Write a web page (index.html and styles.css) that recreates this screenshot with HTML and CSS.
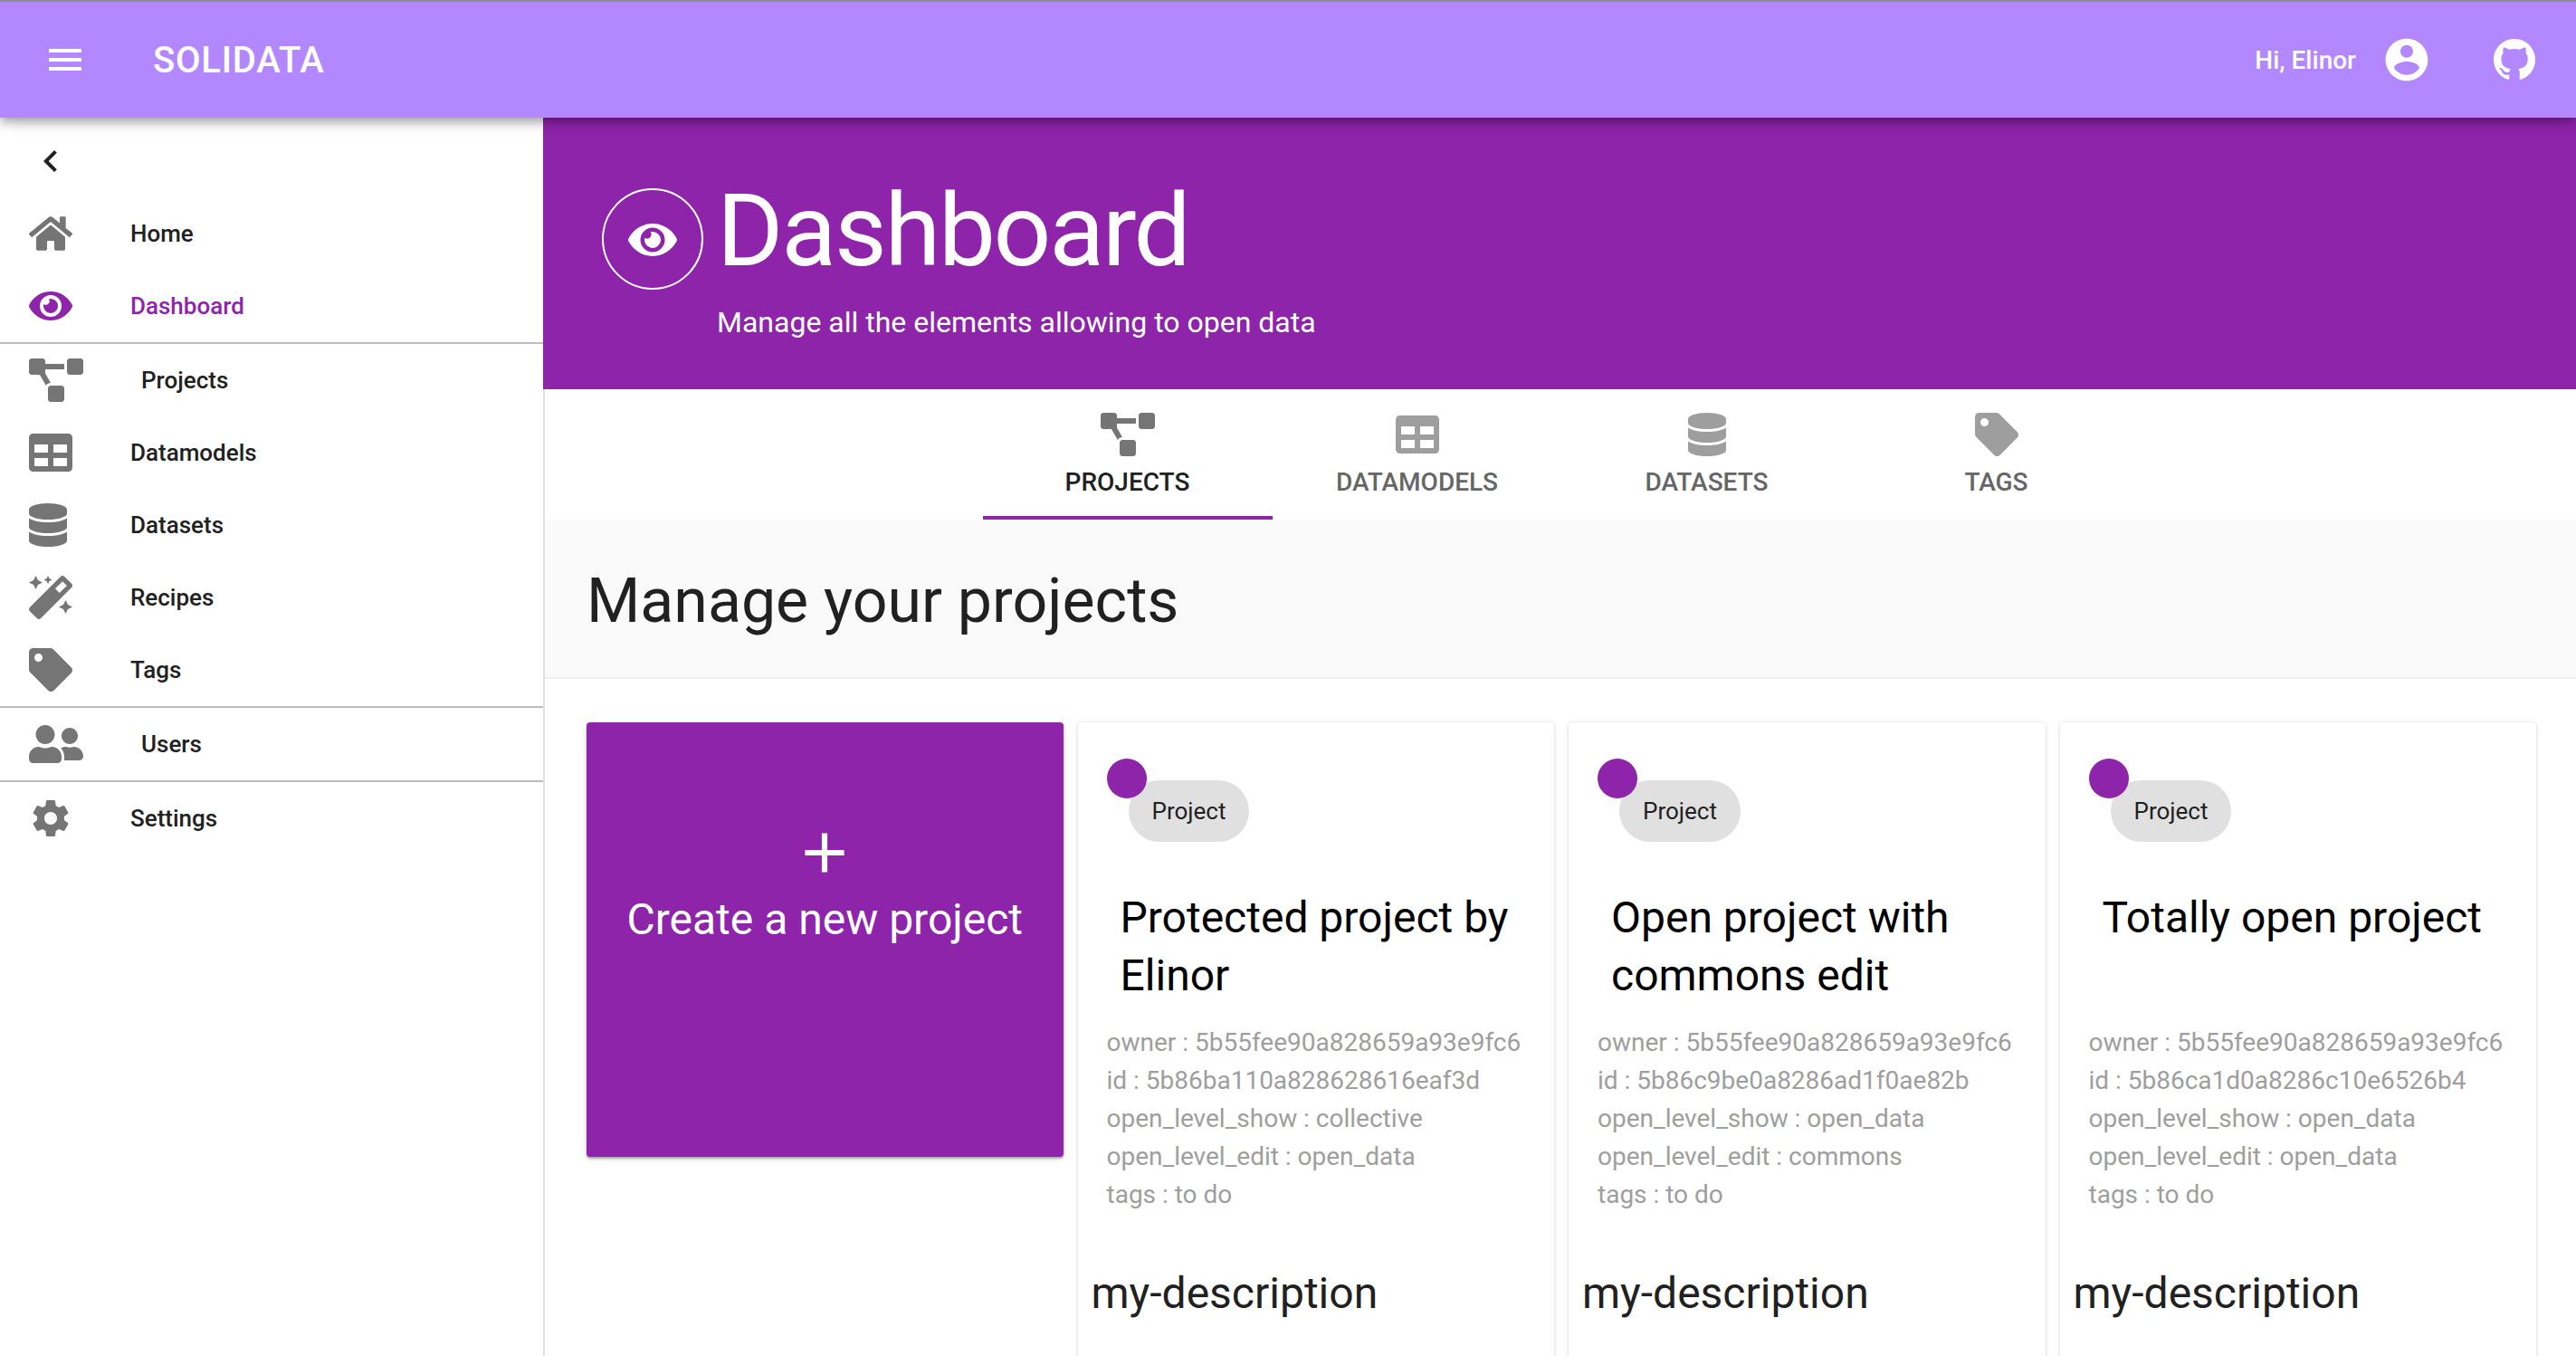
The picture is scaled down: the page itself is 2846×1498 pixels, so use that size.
FILE: index.html
```html
<!DOCTYPE html>
<html lang="en">
<head>
    <meta charset="UTF-8">
    <meta name="viewport" content="width=device-width, initial-scale=1.0">
    <title>Solidata</title>
    <link rel="stylesheet" href="styles.css">
</head>
<body>
    <!-- icon set -->
    <svg class="defs" aria-hidden="true">
        <symbol id="i-home" viewBox="0 0 576 512"><path d="M280.37 148.26L96 300.11V464a16 16 0 0 0 16 16l112.06-.29a16 16 0 0 0 15.92-16V368a16 16 0 0 1 16-16h64a16 16 0 0 1 16 16v95.64a16 16 0 0 0 16 16.05L464 480a16 16 0 0 0 16-16V300L295.67 148.26a12.19 12.19 0 0 0-15.3 0zM571.6 251.47L488 182.56V44.05a12 12 0 0 0-12-12h-56a12 12 0 0 0-12 12v72.61L318.47 43a48 48 0 0 0-61 0L4.34 251.47a12 12 0 0 0-1.6 16.9l25.5 31A12 12 0 0 0 45.15 301l235.22-193.74a12.19 12.19 0 0 1 15.3 0L530.9 301a12 12 0 0 0 16.9-1.6l25.5-31a12 12 0 0 0-1.7-16.93z"/></symbol>
        <symbol id="i-eye" viewBox="0 0 576 512"><path d="M572.52 241.4C518.29 135.59 410.93 64 288 64S57.68 135.64 3.48 241.41a32.35 32.35 0 0 0 0 29.19C57.71 376.41 165.07 448 288 448s230.32-71.64 284.52-177.41a32.35 32.35 0 0 0 0-29.19zM288 400a144 144 0 1 1 144-144 143.93 143.93 0 0 1-144 144zm0-240a95.31 95.31 0 0 0-25.31 3.79 47.85 47.85 0 0 1-66.9 66.9A95.78 95.78 0 1 0 288 160z"/></symbol>
        <symbol id="i-project" viewBox="0 0 640 512"><path d="M384 320H256c-17.67 0-32 14.33-32 32v128c0 17.67 14.33 32 32 32h128c17.67 0 32-14.33 32-32V352c0-17.67-14.33-32-32-32zM192 32c0-17.67-14.33-32-32-32H32C14.33 0 0 14.33 0 32v128c0 17.67 14.33 32 32 32h95.72l73.16 128.04C211.98 300.98 232.4 288 256 288h.28L192 175.51V128h224V64H192V32zM608 0H480c-17.67 0-32 14.33-32 32v128c0 17.67 14.33 32 32 32h128c17.67 0 32-14.33 32-32V32c0-17.67-14.33-32-32-32z"/></symbol>
        <symbol id="i-table" viewBox="0 0 512 512"><path d="M464 32H48C21.49 32 0 53.49 0 80v352c0 26.51 21.49 48 48 48h416c26.51 0 48-21.49 48-48V80c0-26.51-21.49-48-48-48zM224 416H64v-96h160v96zm0-160H64v-96h160v96zm224 160H288v-96h160v96zm0-160H288v-96h160v96z"/></symbol>
        <symbol id="i-database" viewBox="0 0 448 512"><path d="M448 73.143v45.714C448 159.143 347.667 192 224 192S0 159.143 0 118.857V73.143C0 32.857 100.333 0 224 0s224 32.857 224 73.143zM448 176v102.857C448 319.143 347.667 352 224 352S0 319.143 0 278.857V176c48.125 33.143 136.208 48.572 224 48.572S399.874 209.143 448 176zm0 160v102.857C448 479.143 347.667 512 224 512S0 479.143 0 438.857V336c48.125 33.143 136.208 48.572 224 48.572S399.874 369.143 448 336z"/></symbol>
        <symbol id="i-magic" viewBox="0 0 512 512"><path d="M224 96l16-32 32-16-32-16-16-32-16 32-32 16 32 16 16 32zM80 160l26.66-53.33L160 80l-53.34-26.67L80 0 53.34 53.33 0 80l53.34 26.67L80 160zm352 128l-26.66 53.33L352 368l53.34 26.67L432 448l26.66-53.33L512 368l-53.34-26.67L432 288zm70.62-193.77L417.77 9.38C411.53 3.12 403.34 0 395.15 0c-8.19 0-16.38 3.12-22.63 9.38L9.38 372.52c-12.5 12.5-12.5 32.76 0 45.25l84.85 84.85c6.25 6.25 14.44 9.37 22.62 9.37 8.19 0 16.38-3.12 22.63-9.37l363.14-363.15c12.5-12.48 12.5-32.75 0-45.24zM359.45 203.46l-50.91-50.91 86.6-86.6 50.91 50.91-86.6 86.6z"/></symbol>
        <symbol id="i-tag" viewBox="0 0 512 512"><path d="M0 252.118V48C0 21.49 21.49 0 48 0h204.118a48 48 0 0 1 33.941 14.059l211.882 211.882c18.745 18.745 18.745 49.137 0 67.882L293.823 497.941c-18.745 18.745-49.137 18.745-67.882 0L14.059 286.059A48 48 0 0 1 0 252.118zM112 64c-26.51 0-48 21.49-48 48s21.49 48 48 48 48-21.49 48-48-21.49-48-48-48z"/></symbol>
        <symbol id="i-users" viewBox="0 0 640 512"><path d="M192 256c61.9 0 112-50.1 112-112S253.9 32 192 32 80 82.1 80 144s50.1 112 112 112zm76.8 32h-8.3c-20.8 10-43.9 16-68.5 16s-47.6-6-68.5-16h-8.3C51.6 288 0 339.6 0 403.2V432c0 26.5 21.5 48 48 48h288c26.5 0 48-21.5 48-48v-28.8c0-63.6-51.6-115.2-115.2-115.2zM480 256c53 0 96-43 96-96s-43-96-96-96-96 43-96 96 43 96 96 96zm48 32h-3.8c-13.9 4.8-28.6 8-44.2 8s-30.3-3.2-44.2-8H432c-20.4 0-39.2 5.9-55.7 15.4 24.4 26.3 39.7 61.2 39.7 99.8v38.4c0 2.2-.5 4.3-.6 6.4H592c26.5 0 48-21.5 48-48 0-61.9-50.1-112-112-112z"/></symbol>
        <symbol id="i-cog" viewBox="0 0 24 24"><path d="M19.43 12.98c.04-.32.07-.64.07-.98s-.03-.66-.07-.98l2.11-1.65c.19-.15.24-.42.12-.64l-2-3.46c-.12-.22-.39-.3-.61-.22l-2.49 1c-.52-.4-1.08-.73-1.69-.98l-.38-2.65C14.46 2.18 14.25 2 14 2h-4c-.25 0-.46.18-.49.42l-.38 2.65c-.61.25-1.17.59-1.69.98l-2.49-1c-.23-.09-.49 0-.61.22l-2 3.46c-.13.22-.07.49.12.64l2.11 1.65c-.04.32-.07.65-.07.98s.03.66.07.98l-2.11 1.65c-.19.15-.24.42-.12.64l2 3.46c.12.22.39.3.61.22l2.49-1c.52.4 1.08.73 1.69.98l.38 2.65c.03.24.24.42.49.42h4c.25 0 .46-.18.49-.42l.38-2.65c.61-.25 1.17-.59 1.69-.98l2.49 1c.23.09.49 0 .61-.22l2-3.46c.12-.22.07-.49-.12-.64l-2.11-1.65zM12 15.5c-1.93 0-3.5-1.57-3.5-3.5s1.57-3.5 3.5-3.5 3.5 1.57 3.5 3.5-1.57 3.5-3.5 3.5z"/></symbol>
    </svg>

    <header class="topbar">
        <svg class="menu-btn" viewBox="0 0 24 24"><path d="M3 18h18v-2H3v2zm0-5h18v-2H3v2zm0-7v2h18V6H3z"/></svg>
        <span class="brand">SOLIDATA</span>
        <span class="hello">Hi, Elinor</span>
        <svg class="account" viewBox="0 0 24 24"><path d="M12 2C6.48 2 2 6.48 2 12s4.48 10 10 10 10-4.48 10-10S17.52 2 12 2zm0 3c1.66 0 3 1.34 3 3s-1.34 3-3 3-3-1.34-3-3 1.34-3 3-3zm0 14.2c-2.5 0-4.71-1.28-6-3.22.03-1.99 4-3.08 6-3.08 1.99 0 5.97 1.09 6 3.08-1.29 1.94-3.5 3.22-6 3.22z"/></svg>
        <svg class="github" viewBox="0 0 16 16"><path d="M8 0C3.58 0 0 3.58 0 8c0 3.54 2.29 6.53 5.47 7.59.4.07.55-.17.55-.38 0-.19-.01-.82-.01-1.49-2.01.37-2.53-.49-2.69-.94-.09-.23-.48-.94-.82-1.13-.28-.15-.68-.52-.01-.53.63-.01 1.08.58 1.23.82.72 1.21 1.87.87 2.33.66.07-.52.28-.87.51-1.07-1.78-.2-3.64-.89-3.64-3.95 0-.87.31-1.59.82-2.15-.08-.2-.36-1.02.08-2.12 0 0 .67-.21 2.2.82.64-.18 1.32-.27 2-.27.68 0 1.36.09 2 .27 1.53-1.04 2.2-.82 2.2-.82.44 1.1.16 1.92.08 2.12.51.56.82 1.27.82 2.15 0 3.07-1.87 3.75-3.65 3.95.29.25.54.73.54 1.48 0 1.07-.01 1.93-.01 2.2 0 .21.15.46.55.38A8.013 8.013 0 0016 8c0-4.42-3.58-8-8-8z"/></svg>
    </header>

    <div class="layout">
        <aside class="sidebar">
            <div class="side-back">
                <svg class="chevron" viewBox="0 0 24 24"><path d="M15.41 7.41L14 6l-6 6 6 6 1.41-1.41L10.83 12z"/></svg>
            </div>
            <ul class="side-list">
                <li class="side-item"><svg class="ico"><use href="#i-home"/></svg>Home</li>
                <li class="side-item on"><svg class="ico"><use href="#i-eye"/></svg>Dashboard</li>
            </ul>
            <ul class="side-list">
                <li class="side-item"><svg class="ico ico-wide"><use href="#i-project"/></svg>Projects</li>
                <li class="side-item"><svg class="ico"><use href="#i-table"/></svg>Datamodels</li>
                <li class="side-item"><svg class="ico ico-narrow"><use href="#i-database"/></svg>Datasets</li>
                <li class="side-item"><svg class="ico"><use href="#i-magic"/></svg>Recipes</li>
                <li class="side-item"><svg class="ico"><use href="#i-tag"/></svg>Tags</li>
            </ul>
            <ul class="side-list">
                <li class="side-item"><svg class="ico ico-wide"><use href="#i-users"/></svg>Users</li>
            </ul>
            <ul class="side-list">
                <li class="side-item"><svg class="ico"><use href="#i-cog"/></svg>Settings</li>
            </ul>
        </aside>

        <main class="main">
            <section class="hero">
                <div class="hero-title">
                    <span class="hero-badge"><svg class="hero-eye"><use href="#i-eye"/></svg></span>
                    <h1>Dashboard</h1>
                </div>
                <p class="hero-sub">Manage all the elements allowing to open data</p>
            </section>

            <nav class="tabs">
                <div class="tab active"><svg class="tab-ico tab-wide"><use href="#i-project"/></svg>Projects</div>
                <div class="tab"><svg class="tab-ico"><use href="#i-table"/></svg>Datamodels</div>
                <div class="tab"><svg class="tab-ico tab-narrow"><use href="#i-database"/></svg>Datasets</div>
                <div class="tab"><svg class="tab-ico"><use href="#i-tag"/></svg>Tags</div>
            </nav>

            <div class="manage"><h2>Manage your projects</h2></div>

            <div class="cards">
                <div class="card-new">
                    <svg class="plus" viewBox="0 0 24 24"><path d="M19 13h-6v6h-2v-6H5v-2h6V5h2v6h6v2z"/></svg>
                    <span>Create a new project</span>
                </div>

                <article class="card">
                    <div class="chip"><i class="chip-dot"></i>Project</div>
                    <h3>Protected project by Elinor</h3>
                    <ul class="meta">
                        <li>owner : 5b55fee90a828659a93e9fc6</li>
                        <li>id : 5b86ba110a828628616eaf3d</li>
                        <li>open_level_show : collective</li>
                        <li>open_level_edit : open_data</li>
                        <li>tags : to do</li>
                    </ul>
                    <p class="desc">my-description</p>
                </article>

                <article class="card">
                    <div class="chip"><i class="chip-dot"></i>Project</div>
                    <h3>Open project with commons edit</h3>
                    <ul class="meta">
                        <li>owner : 5b55fee90a828659a93e9fc6</li>
                        <li>id : 5b86c9be0a8286ad1f0ae82b</li>
                        <li>open_level_show : open_data</li>
                        <li>open_level_edit : commons</li>
                        <li>tags : to do</li>
                    </ul>
                    <p class="desc">my-description</p>
                </article>

                <article class="card">
                    <div class="chip"><i class="chip-dot"></i>Project</div>
                    <h3>Totally open project</h3>
                    <ul class="meta">
                        <li>owner : 5b55fee90a828659a93e9fc6</li>
                        <li>id : 5b86ca1d0a8286c10e6526b4</li>
                        <li>open_level_show : open_data</li>
                        <li>open_level_edit : open_data</li>
                        <li>tags : to do</li>
                    </ul>
                    <p class="desc">my-description</p>
                </article>
            </div>
        </main>
    </div>
</body>
</html>
```

FILE: styles.css
```css
html, body{
    margin:0;
    height:100%;
    overflow:hidden;
}
body{
    display:flex;
    flex-direction:column;
    background:#fff;
    color:#212121;
    font-family:Roboto, "Liberation Sans", sans-serif;
}
h1, h2, h3, p, ul{margin:0;padding:0;font-weight:400;}
ul{list-style:none;}
.defs{display:none;}

/* top bar */
.topbar{
    position:relative;
    z-index:3;
    flex:none;
    display:flex;
    align-items:center;
    box-sizing:border-box;
    height:130px;
    padding-left:48px;
    border-top:2px solid #8f8f8f;
    background:#b388ff;
    color:#fff;
    box-shadow:0 4px 8px -2px rgba(0,0,0,.2), 0 8px 10px 0 rgba(0,0,0,.14), 0 2px 20px 0 rgba(0,0,0,.12);
}
.topbar svg{fill:#fff;flex:none;}
.menu-btn{width:48px;height:48px;}
.brand{margin-left:73px;font-size:40px;font-weight:500;letter-spacing:.75px;}
.hello{margin-left:auto;font-size:28px;font-weight:500;}
.account{width:56px;height:56px;margin-left:28px;}
.github{width:46px;height:46px;margin:0 45px 0 68px;}

.layout{flex:1;display:flex;min-height:0;}

/* sidebar */
.sidebar{
    flex:none;
    box-sizing:border-box;
    width:602px;
    border-right:2px solid #e0e0e0;
}
.side-back{
    display:flex;
    align-items:center;
    height:80px;
    padding:8px 0 0 32px;
}
.chevron{width:48px;height:48px;fill:#212121;}
.side-list{border-bottom:2px solid #bdbdbd;}
.side-list:last-child{border-bottom:0;}
.side-item{
    display:flex;
    align-items:center;
    gap:64px;
    height:80px;
    padding-left:32px;
    font-size:26px;
    font-weight:500;
}
.ico{flex:none;width:48px;height:48px;fill:#757575;}
.ico-wide{width:60px;}
.ico-narrow{width:42px;margin-right:6px;}
.side-item.on{color:#8e24aa;}
.side-item.on .ico{fill:#8e24aa;}

/* main column */
.main{flex:1;min-width:0;}
.hero{
    margin-left:-2px;
    height:300px;
    box-sizing:border-box;
    padding:78px 0 0 65px;
    background:#8e24aa;
    color:#fff;
}
.hero-title{display:flex;align-items:center;gap:15px;}
.hero-badge{
    flex:none;
    display:flex;
    align-items:center;
    justify-content:center;
    box-sizing:border-box;
    width:112px;
    height:112px;
    padding-top:2px;
    border:2px solid #fff;
    border-radius:50%;
}
.hero-eye{width:54px;height:48px;fill:#fff;}
.hero h1{
    margin-bottom:18px;
    font-size:112px;
    line-height:94px;
    letter-spacing:-2.24px;
}
.hero-sub{margin:16px 0 0 127px;font-size:32px;line-height:40px;}

.tabs{
    display:flex;
    justify-content:center;
    height:144px;
    padding-left:3px;
}
.tab{
    box-sizing:border-box;
    width:320px;
    padding-top:26px;
    display:flex;
    flex-direction:column;
    align-items:center;
    gap:11px;
    font-size:28px;
    font-weight:500;
    line-height:36px;
    text-transform:uppercase;
    color:#666;
}
.tab-ico{width:48px;height:48px;fill:#9e9e9e;}
.tab-wide{width:60px;}
.tab-narrow{width:42px;}
.tab.active{color:#212121;border-bottom:4px solid #8e24aa;}
.tab.active .tab-ico{fill:#757575;}

.manage{
    box-sizing:border-box;
    height:176px;
    padding:50px 0 0 46px;
    background:#fafafa;
    border-bottom:2px solid #f0f0f0;
}
.manage h2{font-size:68px;line-height:80px;}

/* cards */
.cards{
    display:grid;
    grid-template-columns:repeat(4, 1fr);
    gap:16px;
    align-items:start;
    padding:48px 44px 0 46px;
}
.card-new{
    box-sizing:border-box;
    height:480px;
    padding-top:107px;
    display:flex;
    flex-direction:column;
    align-items:center;
    border-radius:4px;
    background:#8e24aa;
    color:#fff;
    font-size:48px;
    box-shadow:0 2px 2px rgba(0,0,0,.25), 0 2px 6px rgba(0,0,0,.15);
}
.plus{width:74px;height:74px;fill:#fff;margin-bottom:8px;}
.card{
    box-sizing:border-box;
    min-height:760px;
    padding:64px 32px 0;
    border-radius:4px;
    background:#fff;
    box-shadow:0 1px 5px rgba(0,0,0,.14), 0 0 2px rgba(0,0,0,.08);
}
.chip{
    position:relative;
    display:inline-block;
    margin-left:24px;
    padding:0 26px;
    height:68px;
    line-height:68px;
    border-radius:34px;
    background:#e0e0e0;
    font-size:26px;
}
.chip-dot{
    position:absolute;
    left:-24px;
    top:-24px;
    width:44px;
    height:44px;
    border-radius:50%;
    background:#8e24aa;
}
.card h3{
    margin:52px 0 0 15px;
    height:128px;
    font-size:48px;
    line-height:64px;
    color:#000;
}
.meta{margin-top:21px;font-size:28px;line-height:42px;color:#9e9e9e;}
.desc{margin:56px 0 0 -17px;font-size:48px;line-height:64px;}
```
